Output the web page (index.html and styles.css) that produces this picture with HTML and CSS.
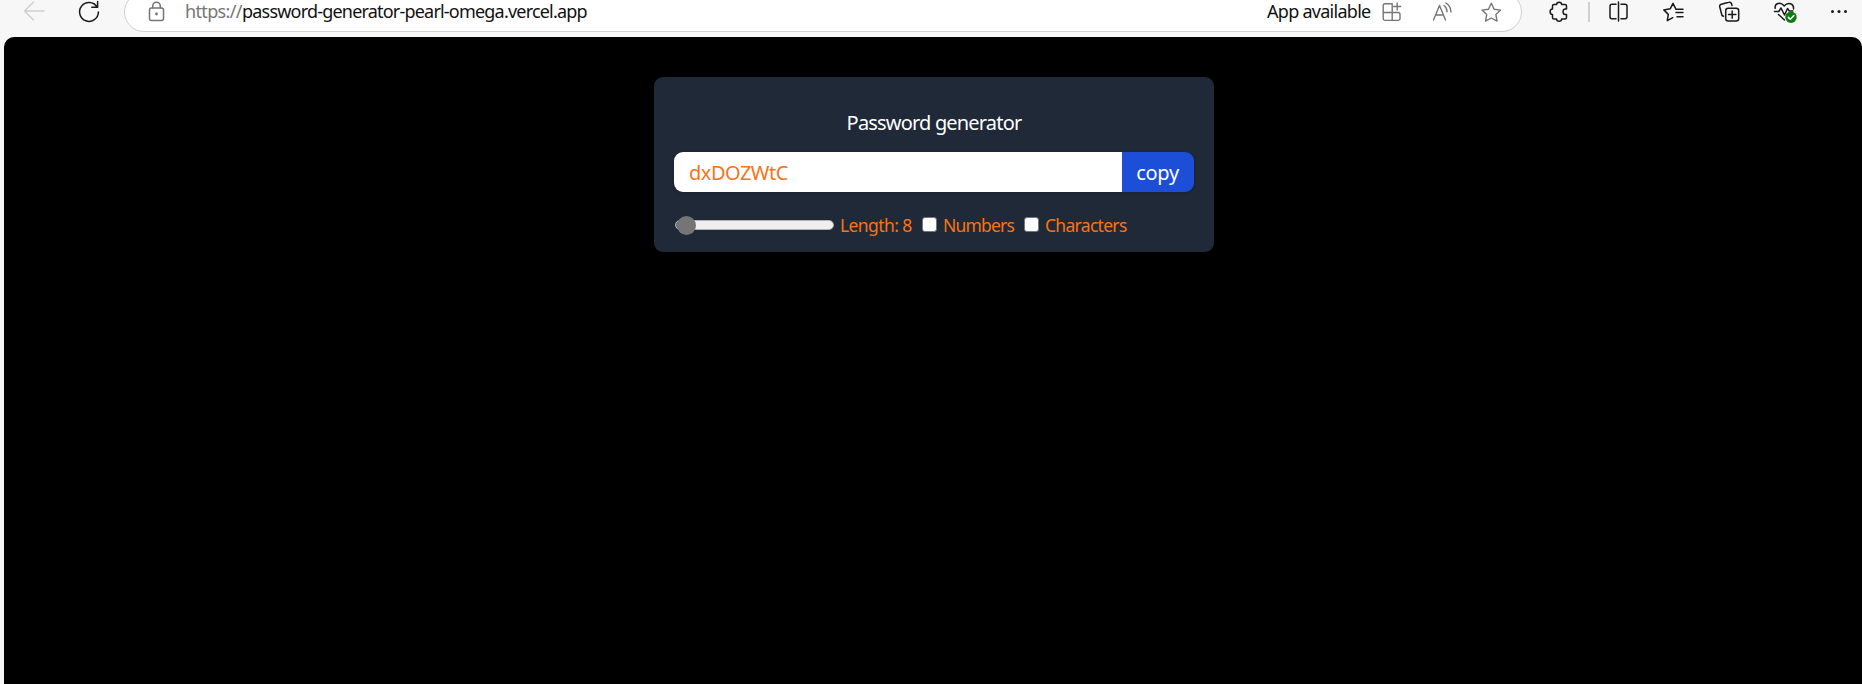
FILE: index.html
```html
<!DOCTYPE html>
<html lang="en">
<head>
<meta charset="utf-8">
<title>Password generator</title>
<link rel="stylesheet" href="styles.css">
</head>
<body>
<header class="browser">
  <div class="toolbar">
    <svg class="icon back" viewBox="0 0 24 24"><path d="M11.5 2 2.5 11l9 9M2.5 11H22"/></svg>
    <svg class="icon reload" viewBox="0 0 24 24"><path d="M20 7A9.4 9.4 0 1 0 21.4 12M20.6 1.5V7.3H14.8"/></svg>
    <div class="address">
      <svg class="icon lock" viewBox="0 0 24 24"><rect x="5.5" y="8" width="14" height="12.5" rx="2"/><path d="M8.7 8V6a3.8 3.8 0 0 1 7.6 0v2"/><circle class="dot" cx="12.5" cy="14" r="1.4"/></svg>
      <span class="scheme">https://</span><span class="host">password-generator-pearl-omega.vercel.app</span>
      <span class="app-label">App available</span>
      <svg class="icon apps" viewBox="0 0 24 24"><path d="M13.2 3.8H6a1.8 1.8 0 0 0-1.8 1.8v13A1.8 1.8 0 0 0 6 20.4h13.2a1.8 1.8 0 0 0 1.8-1.8V14.3a1.8 1.8 0 0 0-1.8-1.8H4.2M13.2 3.8v16.6M18.2 3v7M14.7 6.5h7"/></svg>
      <svg class="icon read" viewBox="0 0 24 24"><path d="M3.5 20 9.5 5.5 15.5 20M5.5 15h8M14 5.5c2 1.3 3 3.5 3 6.2M16 3c3 2 4.8 5 5 9"/></svg>
      <svg class="icon star" viewBox="0 0 24 24"><path d="m12.3 3.3 2.8 5.9 6.5.9-4.7 4.5 1.1 6.5-5.7-3.1-5.7 3.1 1.1-6.5L3 10.1l6.5-.9z"/></svg>
    </div>
    <svg class="icon puzzle" viewBox="0 0 24 24"><path d="M6.5 9V6A1.5 1.5 0 0 1 8 4.5h2.6c0-3 5-3 5 0H19A1.5 1.5 0 0 1 20.500 6v3h-1.2c-3 0-3 5.6 0 5.6h1.2v3a1.5 1.5 0 0 1-1.5 1.5h-3.4c0 3-5 3-5 0H8a1.5 1.5 0 0 1-1.5-1.5v-3c-3.2 0-3.2-5.6 0-5.6z"/></svg>
    <span class="divider"></span>
    <svg class="icon split" viewBox="0 0 24 24"><path d="M10 4.3H6a2 2 0 0 0-2 2v10.4a2 2 0 0 0 2 2h4M15 4.3h4a2 2 0 0 1 2 2v10.4a2 2 0 0 1-2 2h-4M12.5 2v19"/></svg>
    <svg class="icon favorites" viewBox="0 0 24 24"><path d="M22 9.3h-7L12 3.3 9.2 8.8 2.8 9.9l4.500 4.500-1 6.300 5.500-3M15 12.500h7M16 16.700h6"/></svg>
    <svg class="icon collections" viewBox="0 0 24 24"><rect x="8.7" y="8.2" width="13" height="12.8" rx="2.5"/><path d="M15.2 11v7.3M11.5 14.6h7.4M6.5 16.2 5 15.5 2.7 6.7a2.2 2.2 0 0 1 1.6-2.5l7.5-1.9a2.2 2.2 0 0 1 2.7 1.5l.5 1.7"/></svg>
    <svg class="icon health" viewBox="0 0 24 24"><path d="M2.2 8.3C1.500 3 7.500 1.500 11.200 6c3.700-4.500 10-2.500 9.300 3M1.500 11.500h4.300L8 8l3.500 7L14.500 8.500l1.800 2.500h3.500M5.500 14.500l6 5.500"/><circle class="badge" cx="18" cy="17.3" r="5.7"/><path class="check" d="m15.3 17.4 2 1.9 3.6-3.7"/></svg>
    <svg class="icon more" viewBox="0 0 24 24"><circle cx="5.5" cy="11.6" r="1.5"/><circle cx="12" cy="11.6" r="1.5"/><circle cx="18.5" cy="11.6" r="1.5"/></svg>
  </div>
</header>
<main class="page">
  <section class="card">
    <h1 class="title">Password generator</h1>
    <div class="field">
      <input class="password" type="text" value="dxDOZWtC" readonly>
      <button class="copy">copy</button>
    </div>
    <div class="options">
      <div class="slider"><span class="thumb"></span></div>
      <label class="length">Length: 8</label>
      <span class="box"></span><label class="numbers">Numbers</label>
      <span class="box"></span><label class="characters">Characters</label>
    </div>
  </section>
</main>
</body>
</html>
```
FILE: styles.css
```css
* { box-sizing: border-box; }
body {
  margin: 0;
  height: 684px;
  overflow: hidden;
  background: #f7f7f7;
  font-family: "Noto Sans", "Open Sans", sans-serif;
}
.browser { height: 37px; overflow: hidden; }
.toolbar {
  display: flex;
  align-items: center;
  height: 40px;
  margin-top: -8px;
  padding-left: 22px;
}
.icon {
  flex: none;
  width: 24px;
  height: 24px;
  fill: none;
  stroke: #1b1b1b;
  stroke-width: 1.5;
  stroke-linecap: round;
  stroke-linejoin: round;
}
.back { stroke: #cfcfcf; }
.reload { margin-left: 31px; }
.address {
  display: flex;
  align-items: center;
  flex: none;
  width: 1398px;
  height: 40px;
  margin-left: 23px;
  padding-left: 19px;
  background: #fff;
  border: 1px solid #d0d0d0;
  border-radius: 20px;
  font-size: 18px;
  line-height: 24px;
  white-space: nowrap;
}
.address span { padding-bottom: 2px; }
.address .icon { stroke: #767676; stroke-width: 1.4; }
.address .lock { stroke-width: 1.5; }
.lock .dot { fill: #767676; stroke: none; }
.scheme { width: 57px; margin-left: 17px; color: #767676; letter-spacing: -0.65px; }
.host { color: #111; letter-spacing: -0.8px; }
.app-label { width: 105px; margin-left: auto; color: #111; letter-spacing: -0.72px; }
.address .apps { margin-left: 7px; }
.read { margin-left: 27px; }
.star { margin: 0 18px 0 25px; }
.puzzle { margin-left: 24px; }
.divider { width: 2px; height: 20px; margin-left: 18px; background: #d0d0d0; }
.split { margin-left: 16px; }
.favorites { margin-left: 31px; }
.collections { margin-left: 32px; }
.health { margin-left: 32px; }
.health .badge { fill: #107c10; stroke: none; }
.health .check { stroke: #fff; }
.more { margin-left: 30px; }
.more circle { fill: #1b1b1b; stroke: none; }

.page {
  height: 647px;
  margin-left: 4px;
  padding: 40px 0 0 650px;
  background: #000;
  border-radius: 10px 10px 0 0;
}
.card {
  width: 560px;
  height: 175px;
  padding: 32px 20px 0;
  background: #1f2937;
  border-radius: 9px;
}
.title {
  margin: 0 0 15px;
  color: #fff;
  font-size: 20px;
  font-weight: 400;
  line-height: 28px;
  text-align: center;
  letter-spacing: -0.82px;
}
.field {
  display: flex;
  height: 40px;
  overflow: hidden;
  border-radius: 9px;
  box-shadow: 0 1px 3px rgba(0, 0, 0, .15);
}
.password, .copy { border: 0; outline: 0; font-family: inherit; font-size: 20px; }
.password {
  flex: 1;
  min-width: 0;
  padding: 0 15px;
  background: #fff;
  color: #f97316;
  letter-spacing: -0.5px;
}
.copy {
  width: 72px;
  padding: 0 1px 0 0;
  background: #1d4ed8;
  color: #fff;
  letter-spacing: -0.3px;
}
.options {
  display: flex;
  align-items: center;
  height: 24px;
  margin-top: 21px;
  color: #f97316;
  font-size: 17.5px;
  line-height: 24px;
  white-space: nowrap;
}
.slider {
  display: flex;
  align-items: center;
  width: 159px;
  height: 10px;
  margin-left: 1px;
  padding-left: 1px;
  border: 1px solid #b2b2b2;
  border-radius: 5px;
  background: linear-gradient(90deg, #757575 10px, #efefef 10px);
}
.thumb { width: 19px; height: 19px; border-radius: 50%; background: #757575; }
.length { width: 74px; margin-left: 6px; letter-spacing: -0.6px; }
.box {
  width: 15px;
  height: 15px;
  margin: -2px 6px 0 8px;
  background: #fff;
  border: 1px solid #767676;
  border-radius: 3px;
}
.numbers { width: 73px; letter-spacing: -0.8px; }
.characters { letter-spacing: -0.7px; }
```
